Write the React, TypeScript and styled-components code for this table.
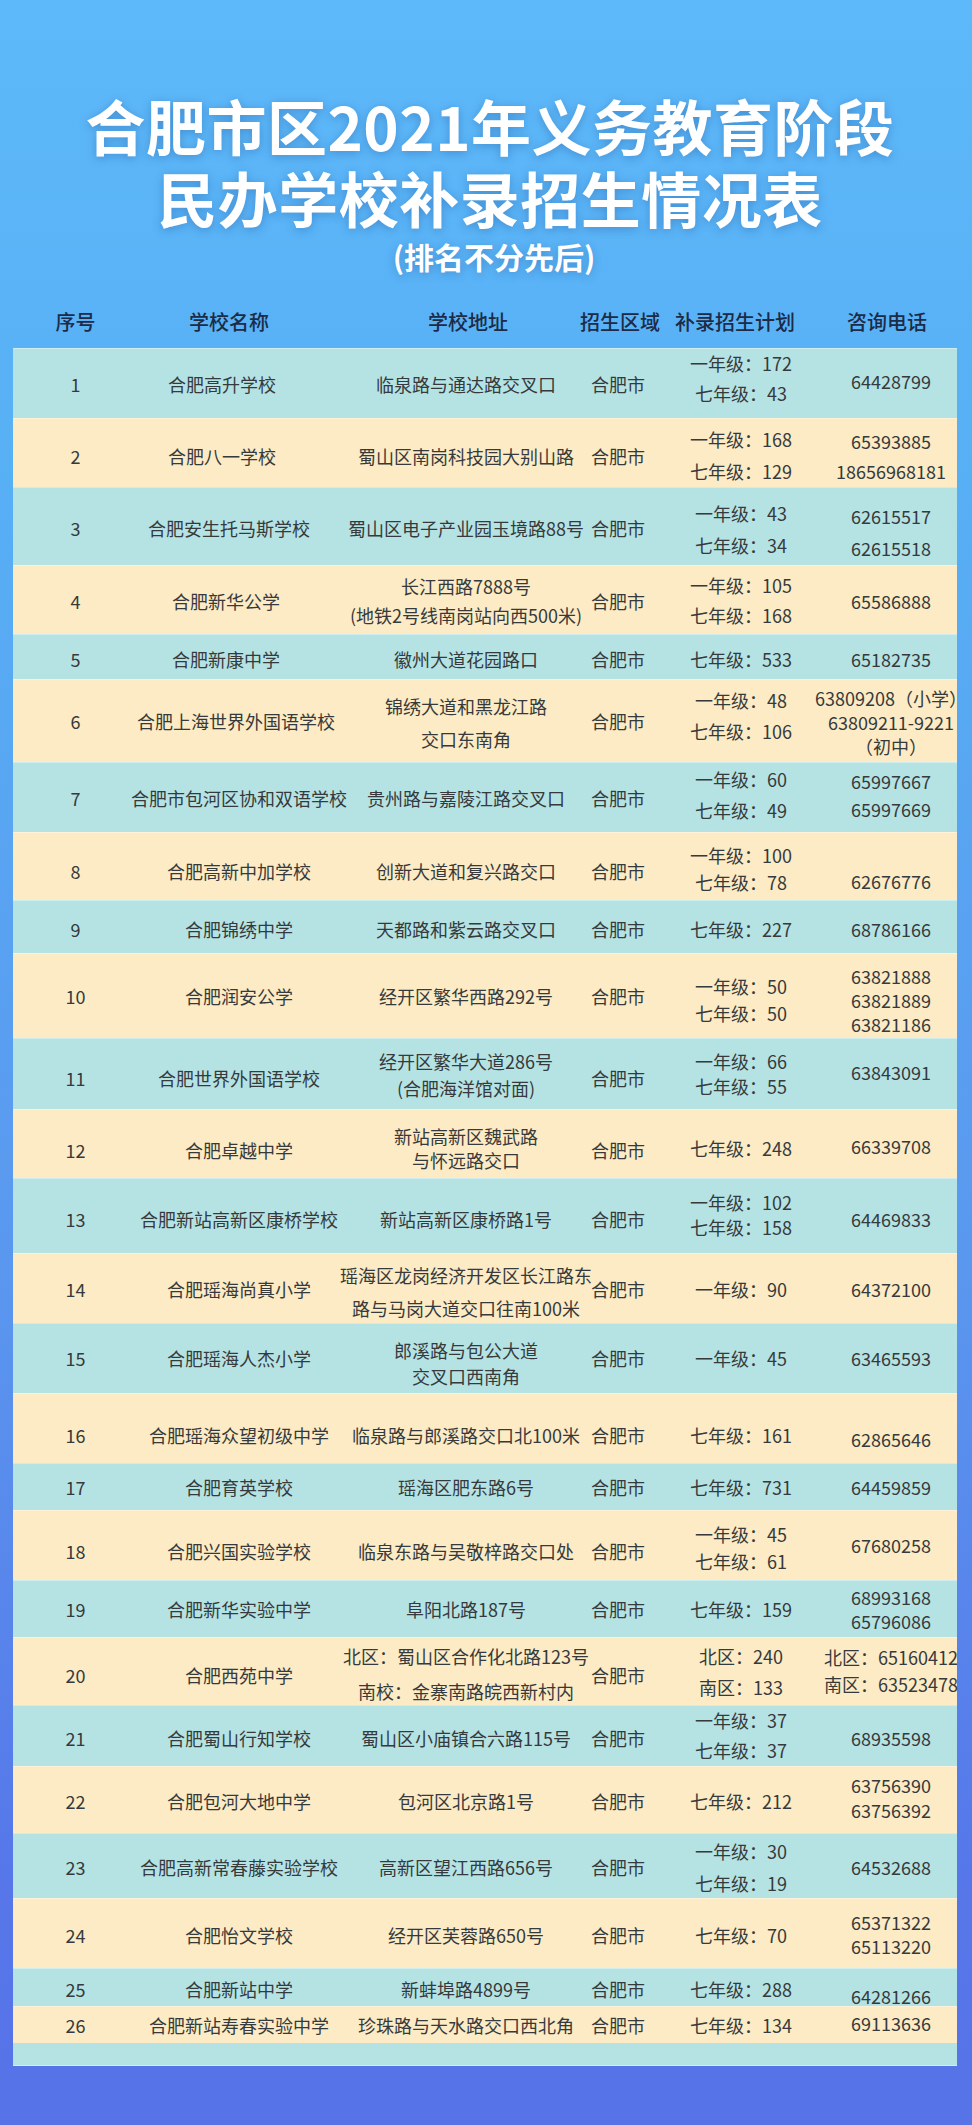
import React from 'react';
import styled, { createGlobalStyle } from 'styled-components';

const Global = createGlobalStyle`
  html, body { margin: 0; padding: 0; background: #5673e8; }
  body { font-family: "Noto Sans CJK SC", "Noto Sans", sans-serif; }
`;

const Page = styled.div`
  width: 972px;
  min-height: 2125px;
  box-sizing: border-box;
  padding: 89px 15px 0 13px;
  background: linear-gradient(180deg, #5db9f9 0%, #57aef4 25%, #5a97ef 60%, #5677e9 88%, #5673e8 100%);
`;

const Title = styled.h1`
  margin: 0;
  padding-left: 10px;
  text-align: center;
  color: #ffffff;
  font-size: 60px;
  line-height: 72px;
  font-weight: 700;
  letter-spacing: 0.5px;
  text-shadow: 0 2px 10px rgba(20, 70, 140, 0.35);
`;

const TitleLine = styled.div`
  height: 72px;
  white-space: nowrap;
`;

const Subtitle = styled.div`
  margin-top: 3px;
  padding-left: 18px;
  text-align: center;
  color: #ffffff;
  font-size: 30px;
  line-height: 40px;
  font-weight: 700;
  text-shadow: 0 2px 8px rgba(20, 70, 140, 0.35);
`;

const Table = styled.div`
  margin-top: 16px;
  width: 944px;
  display: flex;
  flex-direction: column;
`;

const cols = '125px 202px 252px 52px 194px 106px';

const HeaderRow = styled.div`
  display: grid;
  grid-template-columns: ${cols};
  height: 56px;
  color: #1c2b47;
  font-size: 20px;
  font-weight: 500;
`;

const HeaderCell = styled.div<{ $dx?: number }>`
  display: flex;
  align-items: center;
  justify-content: center;
  white-space: nowrap;
  padding-top: 2px;
  box-sizing: border-box;
  padding-right: ${p => Math.max(0, -(p.$dx ?? 0) * 2)}px;
  padding-left: ${p => Math.max(0, (p.$dx ?? 0) * 2)}px;
`;

const Row = styled.div<{ $h: number; $alt: boolean }>`
  display: grid;
  grid-template-columns: ${cols};
  height: ${p => p.$h}px;
  box-sizing: border-box;
  background: ${p => (p.$alt ? '#fcebc4' : '#b5e3e4')};
  box-shadow: inset 0 1px 0 rgba(255, 255, 255, 0.35);
  color: #363a3c;
  font-size: 18px;
`;

const Cell = styled.div<{ $shift?: number; $lh?: number; $dx?: number }>`
  position: relative;
  z-index: 1;
  display: flex;
  flex-direction: column;
  align-items: center;
  justify-content: center;
  white-space: nowrap;
  min-width: 0;
  box-sizing: border-box;
  line-height: ${p => p.$lh ?? 28}px;
  padding-top: ${p => Math.max(0, (p.$shift ?? 0) * 2)}px;
  padding-bottom: ${p => Math.max(0, -(p.$shift ?? 0) * 2)}px;
  padding-right: ${p => Math.max(0, -(p.$dx ?? 0) * 2)}px;
  padding-left: ${p => Math.max(0, (p.$dx ?? 0) * 2)}px;
`;

const Line = styled.div`
  white-space: nowrap;
`;

const EmptyRow = styled.div`
  height: 22px;
  background: #b5e3e4;
  border-bottom: 1px solid rgba(255, 255, 255, 0.4);
`;

type R = {
  no: number;
  name: string;
  addr: string[];
  plan: string[];
  phone: string[];
  h: number;
  s: number;
  nameDx?: number;
  addrS?: number;
  planS?: number;
  phoneS?: number;
  addrLh?: number;
  planLh?: number;
  phoneLh?: number;
};

const rows: R[] = [
  { no: 1, name: '合肥高升学校', addr: ['临泉路与通达路交叉口'], plan: ['一年级：172', '七年级：43'], phone: ['64428799'], h: 70, s: 1, nameDx: -17, planS: -5, phoneS: -2, planLh: 30 },
  { no: 2, name: '合肥八一学校', addr: ['蜀山区南岗科技园大别山路'], plan: ['一年级：168', '七年级：129'], phone: ['65393885', '18656968181'], h: 69, s: 3, nameDx: -17, planS: 2, planLh: 32, phoneLh: 30 },
  { no: 3, name: '合肥安生托马斯学校', addr: ['蜀山区电子产业园玉境路88号'], plan: ['一年级：43', '七年级：34'], phone: ['62615517', '62615518'], h: 78, s: 2, nameDx: -10, planS: 3, phoneS: 6, planLh: 32, phoneLh: 32 },
  { no: 4, name: '合肥新华公学', addr: ['长江西路7888号', '(地铁2号线南岗站向西500米)'], plan: ['一年级：105', '七年级：168'], phone: ['65586888'], h: 69, s: 1, nameDx: -13, planS: 0, addrLh: 29, planLh: 30 },
  { no: 5, name: '合肥新康中学', addr: ['徽州大道花园路口'], plan: ['七年级：533'], phone: ['65182735'], h: 45, s: 2, nameDx: -13 },
  { no: 6, name: '合肥上海世界外国语学校', addr: ['锦绣大道和黑龙江路', '交口东南角'], plan: ['一年级：48', '七年级：106'], phone: ['63809208（小学）', '63809211-9221', '（初中）'], h: 83, s: 0, nameDx: -3, addrS: 2, planS: -5, phoneS: 1, addrLh: 33, planLh: 31, phoneLh: 24 },
  { no: 7, name: '合肥市包河区协和双语学校', addr: ['贵州路与嘉陵江路交叉口'], plan: ['一年级：60', '七年级：49'], phone: ['65997667', '65997669'], h: 70, s: 1, planS: -2, phoneS: -2, planLh: 31, phoneLh: 28 },
  { no: 8, name: '合肥高新中加学校', addr: ['创新大道和复兴路交口'], plan: ['一年级：100', '七年级：78'], phone: ['62676776'], h: 68, s: 5, planS: 3, phoneS: 15, planLh: 27 },
  { no: 9, name: '合肥锦绣中学', addr: ['天都路和紫云路交叉口'], plan: ['七年级：227'], phone: ['68786166'], h: 53, s: 2 },
  { no: 10, name: '合肥润安公学', addr: ['经开区繁华西路292号'], plan: ['一年级：50', '七年级：50'], phone: ['63821888', '63821889', '63821186'], h: 85, s: 0, planS: 4, phoneS: 4, planLh: 27, phoneLh: 24 },
  { no: 11, name: '合肥世界外国语学校', addr: ['经开区繁华大道286号', '(合肥海洋馆对面)'], plan: ['一年级：66', '七年级：55'], phone: ['63843091'], h: 71, s: 4, addrS: 1, planS: 0, phoneS: -2, addrLh: 27, planLh: 25 },
  { no: 12, name: '合肥卓越中学', addr: ['新站高新区魏武路', '与怀远路交口'], plan: ['七年级：248'], phone: ['66339708'], h: 69, s: 6, addrS: 4, planS: 4, phoneS: 2, addrLh: 24 },
  { no: 13, name: '合肥新站高新区康桥学校', addr: ['新站高新区康桥路1号'], plan: ['一年级：102', '七年级：158'], phone: ['64469833'], h: 75, s: 3, planS: -1, planLh: 25 },
  { no: 14, name: '合肥瑶海尚真小学', addr: ['瑶海区龙岗经济开发区长江路东', '路与马岗大道交口往南100米'], plan: ['一年级：90'], phone: ['64372100'], h: 70, s: 0, addrS: 3, addrLh: 33 },
  { no: 15, name: '合肥瑶海人杰小学', addr: ['郎溪路与包公大道', '交叉口西南角'], plan: ['一年级：45'], phone: ['63465593'], h: 70, s: 0, addrS: 5, addrLh: 26 },
  { no: 16, name: '合肥瑶海众望初级中学', addr: ['临泉路与郎溪路交口北100米'], plan: ['七年级：161'], phone: ['62865646'], h: 70, s: 7, phoneS: 11 },
  { no: 17, name: '合肥育英学校', addr: ['瑶海区肥东路6号'], plan: ['七年级：731'], phone: ['64459859'], h: 47, s: 0 },
  { no: 18, name: '合肥兴国实验学校', addr: ['临泉东路与吴敬梓路交口处'], plan: ['一年级：45', '七年级：61'], phone: ['67680258'], h: 70, s: 6, planS: 3, phoneS: 0, planLh: 27 },
  { no: 19, name: '合肥新华实验中学', addr: ['阜阳北路187号'], plan: ['七年级：159'], phone: ['68993168', '65796086'], h: 57, s: 0, phoneS: 0, phoneLh: 24 },
  { no: 20, name: '合肥西苑中学', addr: ['北区：蜀山区合作化北路123号', '南校：金寨南路皖西新村内'], plan: ['北区：240', '南区：133'], phone: ['北区：65160412', '南区：63523478'], h: 68, s: 2, addrS: 1, planS: -1, phoneS: -2, addrLh: 35, planLh: 31, phoneLh: 27 },
  { no: 21, name: '合肥蜀山行知学校', addr: ['蜀山区小庙镇合六路115号'], plan: ['一年级：37', '七年级：37'], phone: ['68935598'], h: 61, s: 1, planS: -2, planLh: 30 },
  { no: 22, name: '合肥包河大地中学', addr: ['包河区北京路1号'], plan: ['七年级：212'], phone: ['63756390', '63756392'], h: 67, s: 1, phoneS: -2, phoneLh: 25 },
  { no: 23, name: '合肥高新常春藤实验学校', addr: ['高新区望江西路656号'], plan: ['一年级：30', '七年级：19'], phone: ['64532688'], h: 65, s: 1, planS: 1, planLh: 32 },
  { no: 24, name: '合肥怡文学校', addr: ['经开区芙蓉路650号'], plan: ['七年级：70'], phone: ['65371322', '65113220'], h: 70, s: 2, phoneS: 1, phoneLh: 24 },
  { no: 25, name: '合肥新站中学', addr: ['新蚌埠路4899号'], plan: ['七年级：288'], phone: ['64281266'], h: 38, s: 0, phoneS: 7 },
  { no: 26, name: '合肥新站寿春实验中学', addr: ['珍珠路与天水路交口西北角'], plan: ['七年级：134'], phone: ['69113636'], h: 37, s: 0, phoneS: -2 },
];

const headers: { t: string; dx: number }[] = [
  { t: '序号', dx: 0 },
  { t: '学校名称', dx: -10 },
  { t: '学校地址', dx: 2 },
  { t: '招生区域', dx: 2 },
  { t: '补录招生计划', dx: -6 },
  { t: '咨询电话', dx: -4 },
];

const Lines = ({ items }: { items: string[] }) => (
  <>
    {items.map((t, i) => (
      <Line key={i}>{t}</Line>
    ))}
  </>
);

export default function App() {
  return (
    <>
      <Global />
      <Page>
        <Title>
          <TitleLine>合肥市区2021年义务教育阶段</TitleLine>
          <TitleLine>民办学校补录招生情况表</TitleLine>
        </Title>
        <Subtitle>(排名不分先后)</Subtitle>
        <Table>
          <HeaderRow>
            {headers.map(h => (
              <HeaderCell key={h.t} $dx={h.dx}>
                {h.t}
              </HeaderCell>
            ))}
          </HeaderRow>
          {rows.map(r => (
            <Row key={r.no} $h={r.h} $alt={r.no % 2 === 0}>
              <Cell $shift={r.s}>{r.no}</Cell>
              <Cell $shift={r.s} $dx={r.nameDx}>
                {r.name}
              </Cell>
              <Cell $shift={r.addrS ?? r.s} $lh={r.addrLh}>
                <Lines items={r.addr} />
              </Cell>
              <Cell $shift={r.s}>合肥市</Cell>
              <Cell $shift={r.planS ?? r.s} $lh={r.planLh}>
                <Lines items={r.plan} />
              </Cell>
              <Cell $shift={r.phoneS ?? r.s} $lh={r.phoneLh}>
                <Lines items={r.phone} />
              </Cell>
            </Row>
          ))}
          <EmptyRow />
        </Table>
      </Page>
    </>
  );
}
